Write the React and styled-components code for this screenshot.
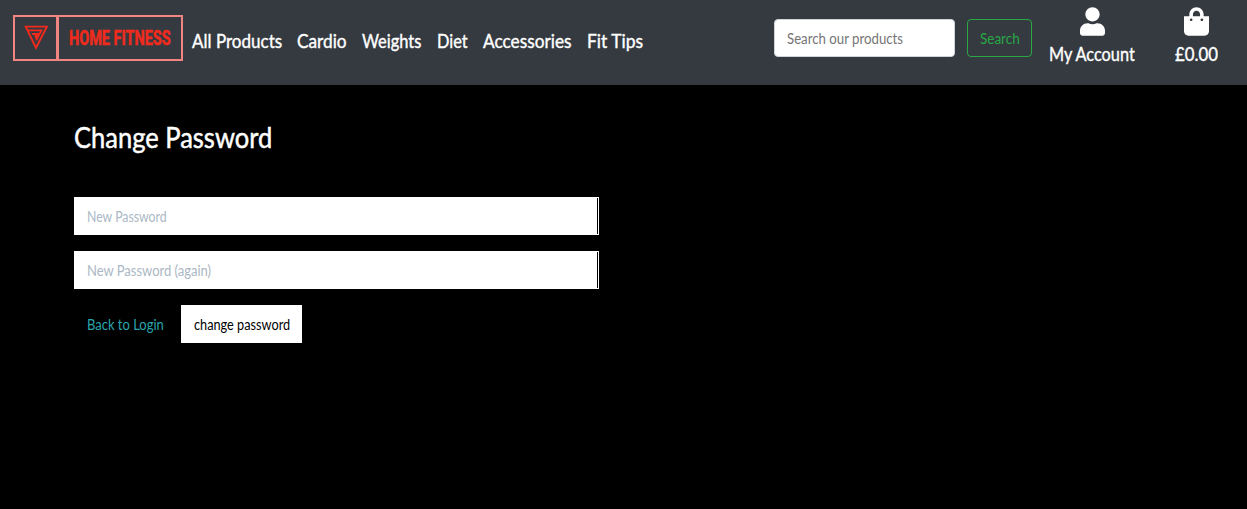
import React, { useLayoutEffect, useRef, useState } from 'react';
import styled, { createGlobalStyle } from 'styled-components';
import { FaUser, FaShoppingBag } from 'react-icons/fa';

const GlobalStyle = createGlobalStyle`
  * { box-sizing: border-box; }
  body {
    margin: 0;
    background: #000;
    color: #fff;
    font-family: Lato, "Open Sans", sans-serif;
  }
`;

const Navbar = styled.header`
  display: flex;
  align-items: flex-start;
  height: 85px;
  padding: 7px 29px 0 13px;
  background: #343a40;
`;

const LogoLink = styled.a`
  display: flex;
  width: 170px;
  height: 46px;
  margin-top: 8px;
  border: 2px solid #f28482;
`;

const LogoMark = styled.span`
  width: 44px;
  padding: 7px 0 0 8px;
  border-right: 3px solid #f28482;
  svg { display: block; }
`;

const LogoName = styled.span`
  padding-left: 10px;
  color: #f02b1d;
  font: 700 20px/43px Roboto, sans-serif;
  -webkit-text-stroke: 0.5px #f02b1d;
`;

const Nav = styled.nav`
  display: flex;
  gap: 15.4px;
  margin: 19px 0 0 9px;
`;

const TextBox = styled.span`
  display: block;
  width: ${p => p.$width}px;
  white-space: nowrap;
`;

const TextRun = styled.span`
  display: inline-block;
  transform-origin: 0 50%;
`;

// Condenses a run of text horizontally to the given width.
function FitText({ width, children }) {
  const ref = useRef(null);
  useLayoutEffect(() => {
    const el = ref.current;
    el.style.transform = `scaleX(${width / el.offsetWidth})`;
  }, [width, children]);
  return <TextBox $width={width}><TextRun ref={ref}>{children}</TextRun></TextBox>;
}

const NavLink = styled.a`
  color: #fff;
  font-size: 19.5px;
  line-height: 30px;
  -webkit-text-stroke: 0.4px #fff;
  text-decoration: none;
`;

const SearchForm = styled.form`
  display: flex;
  gap: 12px;
  margin: 12px 0 0 auto;
`;

const InputWrap = styled.div`
  position: relative;
  display: flex;
  flex: 1;
`;

const Hint = styled.span`
  position: absolute;
  left: ${p => p.$left}px;
  top: 0;
  color: ${p => p.$color};
  font-size: 15.5px;
  line-height: ${p => p.$line}px;
  pointer-events: none;
`;

const SearchInput = styled.input`
  width: 181px;
  height: 38px;
  padding: 0 12px;
  border: 1px solid #ced4da;
  border-radius: 4px;
  background: #fff;
  font: 15.5px Lato, sans-serif;
`;

const SearchButton = styled.button`
  width: 65px;
  height: 38px;
  padding: 0 12px;
  border: 1px solid #28a745;
  border-radius: 4px;
  background: transparent;
  color: #28a745;
  font: 15.5px/36px Lato, sans-serif;
  text-align: left;
`;

const Action = styled.a`
  display: flex;
  flex-direction: column;
  align-items: center;
  margin-left: ${p => p.$gap}px;
  color: #fff;
  font-size: 19.5px;
  line-height: 30px;
  -webkit-text-stroke: 0.4px #fff;
  svg { width: 25px; height: 29px; margin-bottom: 3px; stroke: none; }
`;

const Main = styled.main`
  padding: 34px 0 0 74px;
`;

const Title = styled.h1`
  margin: 0 0 42px;
  font-size: 29.5px;
  font-weight: 400;
  line-height: 36px;
  -webkit-text-stroke: 0.5px #fff;
`;

const Fields = styled.form`
  display: flex;
  flex-direction: column;
  gap: 16px;
  width: 525px;
`;

const Field = styled.div`
  display: flex;
  height: 38px;
  padding-right: 1px;
  border: 1px solid #fff;
  background: #000;
`;

const PasswordInput = styled.input`
  flex: 1;
  min-width: 0;
  padding: 0 12px;
  border: 0;
  border-radius: 0;
  background: #fff;
  font: 15.5px Lato, sans-serif;
`;

const Buttons = styled.div`
  display: flex;
  gap: 17px;
  padding-left: 13px;
`;

const BackLink = styled.a`
  color: #2aa5ad;
  font-size: 15.5px;
  line-height: 38px;
`;

const SubmitButton = styled.button`
  width: 121px;
  height: 38px;
  padding: 0 13px;
  border: 0;
  background: #fff;
  color: #000;
  font: 15.5px/38px Lato, sans-serif;
  text-align: left;
`;

function HintedInput({ as: Input, type, hint, width, left, line, color }) {
  const [value, setValue] = useState('');
  return (
    <InputWrap>
      <Input type={type} aria-label={hint} value={value} onChange={e => setValue(e.target.value)} />
      {value === '' && (
        <Hint $left={left} $line={line} $color={color}><FitText width={width}>{hint}</FitText></Hint>
      )}
    </InputWrap>
  );
}

function Logo() {
  return (
    <LogoLink aria-label="Home Fitness">
      <LogoMark>
        <svg width="26" height="28" viewBox="0 0 26 28">
          <g fill="none" stroke="#f02b1d" strokeWidth="1.9">
            <path d="M2.7 2.6H23.9L13 23.8Z" />
            <path d="M5 6.4H18.3L13.2 16.2" />
          </g>
          <path d="M8.4 9.1h7.8l-3.1 6.4-1.9-3.6 1.2-1H9.4z" fill="#f02b1d" />
        </svg>
      </LogoMark>
      <LogoName><FitText width={102}>HOME FITNESS</FitText></LogoName>
    </LogoLink>
  );
}

const links = [
  ['All Products', 90], ['Cardio', 49.5], ['Weights', 59],
  ['Diet', 31], ['Accessories', 88.5], ['Fit Tips', 56.5],
];

export default function App() {
  return (
    <>
      <GlobalStyle />
      <Navbar>
        <Logo />
        <Nav>
          {links.map(([label, width]) => (
            <NavLink key={label}><FitText width={width}>{label}</FitText></NavLink>
          ))}
        </Nav>
        <SearchForm>
          <HintedInput as={SearchInput} type="search" hint="Search our products" width={116} left={12.5} line={38} color="#757575" />
          <SearchButton type="button"><FitText width={40}>Search</FitText></SearchButton>
        </SearchForm>
        <Action $gap={17}>
          <FaUser />
          <FitText width={86}>My Account</FitText>
        </Action>
        <Action $gap={40}>
          <FaShoppingBag />
          <FitText width={43}>£0.00</FitText>
        </Action>
      </Navbar>
      <Main>
        <Title><FitText width={198}>Change Password</FitText></Title>
        <Fields>
          <Field><HintedInput as={PasswordInput} type="password" hint="New Password" width={80} left={11.5} line={37} color="#aab7c4" /></Field>
          <Field><HintedInput as={PasswordInput} type="password" hint="New Password (again)" width={124} left={11.5} line={37} color="#aab7c4" /></Field>
          <Buttons>
            <BackLink><FitText width={77}>Back to Login</FitText></BackLink>
            <SubmitButton type="button"><FitText width={96}>change password</FitText></SubmitButton>
          </Buttons>
        </Fields>
      </Main>
    </>
  );
}
